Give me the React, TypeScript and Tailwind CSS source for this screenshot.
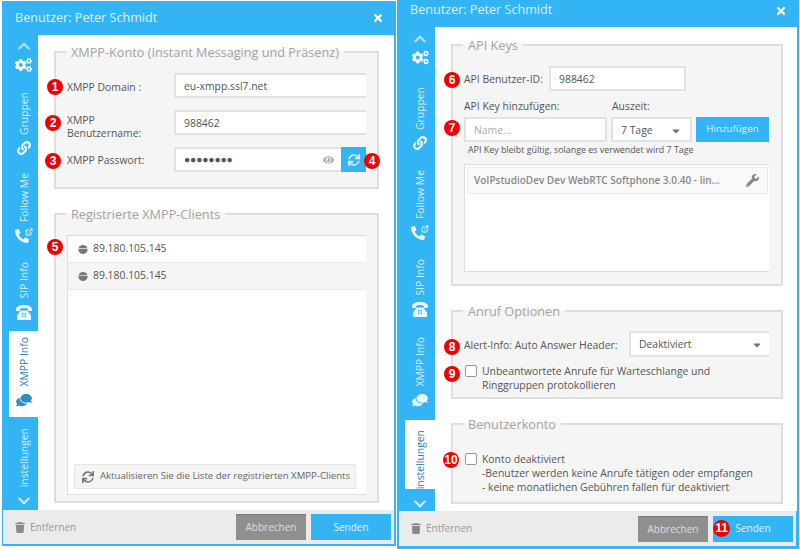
import type { ReactNode } from "react"
import {
  FaCaretDown,
  FaChevronDown,
  FaChevronUp,
  FaCogs,
  FaComments,
  FaEye,
  FaLink,
  FaPhone,
  FaSync,
  FaTimes,
  FaTrash,
  FaWrench,
} from "react-icons/fa"
import { FiExternalLink } from "react-icons/fi"

function Badge({ n, className }: { n: number; className: string }) {
  return (
    <span
      className={`absolute flex h-4 w-4 items-center justify-center rounded-full bg-[#f00000] font-['Liberation_Sans',sans-serif] text-[12px] font-bold text-white ${className}`}
    >
      {n}
    </span>
  )
}

function DeskPhone() {
  return (
    <svg viewBox="0 0 16 15" className="h-[15px] w-4" fill="currentColor">
      <path d="M0 4.5C0 2 3 0 8 0s8 2 8 4.5V6h-4V4.2C11 3.4 9.6 3 8 3s-3 .4-4 1.2V6H0z" />
      <path d="M4.6 5.5h6.8L15 10.5V15H1v-4.5zM6 8v1h1V8zm1.5 0v1h1V8zM9 8v1h1V8zm-3 1.6v1h1v-1zm1.5 0v1h1v-1zm1.5 0v1h1v-1zm-3 1.6v1h1v-1zm1.5 0v1h1v-1zm1.5 0v1h1v-1z" fillRule="evenodd" />
    </svg>
  )
}

function PhoneOut() {
  return (
    <span className="relative block h-[15px] w-[18px]">
      <FaPhone className="absolute bottom-0 left-0 h-[14px] w-[14px] -scale-x-100" />
      <FiExternalLink className="absolute right-0 top-0 h-2 w-2 stroke-[3]" />
    </span>
  )
}

function Tab({
  label,
  icon,
  active,
  className,
}: {
  label: string
  icon?: ReactNode
  active?: boolean
  className: string
}) {
  return (
    <div
      className={`flex w-full shrink-0 flex-col items-center justify-end gap-[6px] overflow-hidden ${active ? "bg-white text-[#1f80b4]" : "text-[#d3effd]"} ${className}`}
    >
      <span className="rotate-180 whitespace-nowrap text-[10.4px] leading-[16px] [writing-mode:vertical-rl]">{label}</span>
      {icon && <span className={active ? "text-[#2a8fc5]" : "text-white/90"}>{icon}</span>}
    </div>
  )
}

function Section({ title, className, children }: { title: string; className?: string; children: ReactNode }) {
  return (
    <fieldset className={`border-2 border-[#dedede] bg-[#f5f5f5] px-[11px] ${className ?? ""}`}>
      <legend className="-ml-px whitespace-nowrap px-[5px] text-[12.7px] leading-[20px] text-[#a3a3a3]">{title}</legend>
      {children}
    </fieldset>
  )
}

function Field({ value, className }: { value: string; className: string }) {
  return (
    <div className={`flex h-[25px] items-center border-2 border-[#e2e2e2] bg-white px-2 pt-[2px] text-[10.4px] text-[#555] ${className}`}>
      {value}
    </div>
  )
}

function Footer({ senden }: { senden?: ReactNode }) {
  return (
    <div className="flex h-full items-center bg-[#ebebeb] pl-[12px] pr-[3px] text-[10px]">
      <FaTrash className="h-[11px] w-[10px] text-[#8a8a8a]" />
      <span className="ml-[5px] text-[#999]">Entfernen</span>
      <button className="ml-auto h-[26px] w-[70px] border-t border-[#777] bg-[#8f8f8f] text-[#ddd]">Abbrechen</button>
      <button className="relative ml-[5px] h-[26px] w-[80px] bg-[#33b5f5] text-[#e6f6fe]">
        {senden}
        Senden
      </button>
    </div>
  )
}

function Check({ className, lines }: { className: string; lines: string[] }) {
  return (
    <div className={`flex items-start gap-[5px] text-[10.4px] leading-[14px] text-[#555] ${className}`}>
      <span className="ml-px mt-px h-3 w-3 shrink-0 rounded-[2px] border border-[#999] bg-white" />
      <div>
        {lines.map((l) => (
          <div key={l}>{l}</div>
        ))}
      </div>
    </div>
  )
}

function ClientRow({ ip, alt }: { ip: string; alt?: boolean }) {
  return (
    <div className={`flex h-[27px] items-center border-b border-[#eaeaea] pl-[9px] text-[10.4px] text-[#555] ${alt ? "bg-[#f5f5f5]" : "bg-white"}`}>
      <svg viewBox="0 0 12 12" className="h-[11px] w-3 text-[#777]">
        <circle cx="6" cy="6" r="5" fill="currentColor" />
        <rect x="0" y="4.6" width="12" height="0.9" fill="#e8e8e8" />
      </svg>
      <span className="ml-[4px]">{ip}</span>
    </div>
  )
}

export default function App() {
  return (
    <div className="flex h-[549px] w-[800px] overflow-hidden bg-white font-['Open_Sans',sans-serif]">
      {/* left dialog */}
      <div className="relative ml-[2px] mt-px flex h-[545px] w-[394px] shrink-0 flex-col bg-[#33b5f5]">
        <div className="flex h-[34px] shrink-0 items-center justify-between pl-[13px] pr-[12px] text-[#dff4fe]">
          <span className="text-[12.6px]">Benutzer: Peter Schmidt</span>
          <FaTimes className="h-[12px] w-[12px] text-white" />
        </div>
        <div className="mr-[2px] flex h-[475px] shrink-0">
          <div className="flex w-[36px] shrink-0 flex-col items-center pl-[7px] text-white">
            <FaChevronUp className="my-[4px] h-[14px] w-[14px] shrink-0 text-white/60" />
            <FaCogs className="mt-[1px] h-[14px] w-[17px] shrink-0" />
            <Tab label="Gruppen" className="h-[87px] pb-[4px]" icon={<FaLink className="h-[14px] w-[14px]" />} />
            <Tab label="Follow Me" className="h-[86px] pb-[2px]" icon={<PhoneOut />} />
            <Tab label="SIP Info" className="h-[86px] pb-[11px]" icon={<DeskPhone />} />
            <Tab label="XMPP Info" active className="h-[86px] pb-[10px]" icon={<FaComments className="h-[14px] w-4 -scale-x-100" />} />
            <Tab label="instellungen" className="h-[73px] pb-[3px]" />
            <FaChevronDown className="mt-[4px] h-[14px] w-[14px] shrink-0 text-white/70" />
          </div>
          <div className="flex-1 bg-white pl-4 pr-[15px] pt-[7px]">
            <Section title="XMPP-Konto (Instant Messaging und Präsenz)" className="h-[147px]">
              <div className="flex flex-col gap-3 pt-[11px] text-[10.4px] text-[#555]">
                <div className="relative flex h-[25px] items-center">
                  <Badge n={1} className="left-[-20px] top-[6px]" />
                  <span className="w-[107px] pt-[4px]">XMPP Domain :</span>
                  <Field value="eu-xmpp.ssl7.net" className="flex-1 border-r-0" />
                </div>
                <div className="relative flex h-[25px] items-center">
                  <Badge n={2} className="left-[-22px] top-[5px]" />
                  <span className="w-[107px] pt-[8px] leading-[13px]">
                    XMPP
                    <br />
                    Benutzername:
                  </span>
                  <Field value="988462" className="flex-1 border-r-0" />
                </div>
                <div className="relative flex h-[25px] items-center">
                  <Badge n={3} className="left-[-22px] top-[6px]" />
                  <span className="w-[107px] pt-[2px]">XMPP Passwort:</span>
                  <div className="flex h-[25px] flex-1 items-center border-2 border-r-0 border-[#e2e2e2] bg-white pl-2 text-[#555]">
                    <span className="text-[10.4px] leading-none tracking-[-0.2px]">●●●●●●●●</span>
                    <FaEye className="ml-auto mr-[6px] h-[10px] w-[13px] text-[#aaa]" />
                  </div>
                  <div className="flex h-[25px] w-[25px] items-center justify-center bg-[#33b5f5]">
                    <FaSync className="h-[12px] w-[12px] text-[#d8f1fd]" />
                  </div>
                  <Badge n={4} className="right-[-14px] top-[6px]" />
                </div>
              </div>
            </Section>
            <Section title="Registrierte XMPP-Clients" className="relative mt-[15px] h-[299px]">
              <Badge n={5} className="left-[-9px] top-[15px]" />
              <div className="mt-[11px] flex h-[260px] flex-col border-y border-l border-[#dedede] bg-white">
                <ClientRow ip="89.180.105.145" />
                <ClientRow ip="89.180.105.145" alt />
                <div className="mb-[5px] ml-[6px] mr-[10px] mt-auto flex h-[25px] items-center border border-[#e6e6e6] bg-[#f5f5f5] pl-[7px] text-[9.6px] text-[#666]">
                  <FaSync className="h-[12px] w-[12px] shrink-0 text-[#777]" />
                  <span className="ml-[6px] whitespace-nowrap">Aktualisieren Sie die Liste der registrierten XMPP-Clients</span>
                </div>
              </div>
            </Section>
          </div>
        </div>
        <div className="ml-px mr-[2px] h-[34px] shrink-0">
          <Footer />
        </div>
      </div>

      {/* right dialog */}
      <div className="ml-px flex h-[549px] w-[402px] shrink-0 flex-col bg-[#33b5f5]">
        <div className="flex h-[27px] shrink-0 items-center justify-between pb-[6px] pl-[13px] pr-[12px] text-[#dff4fe]">
          <span className="text-[12.6px]">Benutzer: Peter Schmidt</span>
          <FaTimes className="h-[12px] w-[12px] text-white" />
        </div>
        <div className="mr-[2px] flex h-[484px] shrink-0">
          <div className="flex w-[38px] shrink-0 flex-col items-center pl-2 text-white">
            <FaChevronUp className="mb-[3px] mt-[5px] h-[14px] w-[14px] shrink-0 text-white/60" />
            <FaCogs className="mt-[1px] h-[15px] w-[17px] shrink-0" />
            <Tab label="Gruppen" className="h-[87px] pb-[2px]" icon={<FaLink className="h-[14px] w-[14px]" />} />
            <Tab label="Follow Me" className="h-[89px] pb-px" icon={<PhoneOut />} />
            <Tab label="SIP Info" className="h-[84px] pb-2" icon={<DeskPhone />} />
            <Tab label="XMPP Info" className="h-[95px] pb-[13px]" icon={<FaComments className="h-[14px] w-4 -scale-x-100" />} />
            <Tab label="instellungen" active className="h-[69px]" />
            <FaChevronDown className="mt-[8px] h-[14px] w-[14px] shrink-0 text-white/70" />
          </div>
          <div className="flex-1 bg-white pl-4 pr-[14px] pt-2">
            <Section title="API Keys" className="relative h-[251px]">
              <Badge n={6} className="left-[-9px] top-[17px]" />
              <Badge n={7} className="left-[-9px] top-[65px]" />
              <div className="flex items-center pt-[11px] text-[10.4px] text-[#555]">
                <span className="w-[85px] pt-[3px]">API Benutzer-ID:</span>
                <Field value="988462" className="w-[137px]" />
              </div>
              <div className="mt-[8px] flex text-[10.4px] leading-[14px] text-[#555]">
                <span className="w-[148px]">API Key hinzufügen:</span>
                <span>Auszeit:</span>
              </div>
              <div className="mt-[4px] flex text-[10.4px]">
                <Field value="Name..." className="w-[143px] !text-[#aaa]" />
                <div className="ml-1 flex h-[25px] w-[81px] items-center justify-between border-2 border-[#e2e2e2] bg-white pl-2 pr-2 pt-[2px] text-[#555]">
                  7 Tage
                  <FaCaretDown className="h-3 w-3 text-[#777]" />
                </div>
                <button className="ml-1 h-[25px] w-[73px] bg-[#33b5f5] text-[9.8px] text-[#dff4fe]">Hinzufügen</button>
              </div>
              <div className="ml-1 mt-[1px] text-[8.9px] leading-[14px] text-[#555]">API Key bleibt gültig, solange es verwendet wird 7 Tage</div>
              <div className="mt-[7px] h-[108px] w-[305px] border-y border-l border-[#dedede] bg-white pl-[2px] pt-[2px]">
                <div className="flex h-[27px] w-[301px] items-center justify-between whitespace-nowrap border border-[#ececec] bg-[#f9f9f9] pl-[6px] pr-[8px] text-[10px] font-semibold text-[#888]">
                  VoIPstudioDev Dev WebRTC Softphone 3.0.40 - lin...
                  <FaWrench className="h-[13px] w-[13px] text-[#888]" />
                </div>
              </div>
            </Section>
            <Section title="Anruf Optionen" className="relative mt-[15px] h-[98px]">
              <Badge n={8} className="left-[-9px] top-[18px]" />
              <Badge n={9} className="left-[-9px] top-[45px]" />
              <div className="flex items-center pt-[10px] text-[10.4px] text-[#555]">
                <span className="w-[165px] whitespace-nowrap pt-[3px]">Alert-Info: Auto Answer Header:</span>
                <div className="flex h-[26px] w-[140px] items-center justify-between border-y-2 border-l-2 border-[#e2e2e2] bg-white pl-2 pr-[6px] pt-[2px]">
                  Deaktiviert
                  <FaCaretDown className="h-3 w-3 text-[#777]" />
                </div>
              </div>
              <Check className="mt-[7px]" lines={["Unbeantwortete Anrufe für Warteschlange und", "Ringgruppen protokollieren"]} />
            </Section>
            <Section title="Benutzerkonto" className="relative mt-[15px] h-[90px]">
              <Badge n={10} className="left-[-10px] top-[18px]" />
              <Check
                className="mt-[18px]"
                lines={["Konto deaktiviert", "-Benutzer werden keine Anrufe tätigen oder empfangen", "- keine monatlichen Gebühren fallen für deaktiviert"]}
              />
            </Section>
          </div>
        </div>
        <div className="ml-[2px] mr-[3px] h-[35px] shrink-0">
          <Footer senden={<Badge n={11} className="left-0 top-[4px] !h-[17px] !w-[17px]" />} />
        </div>
      </div>
    </div>
  )
}
